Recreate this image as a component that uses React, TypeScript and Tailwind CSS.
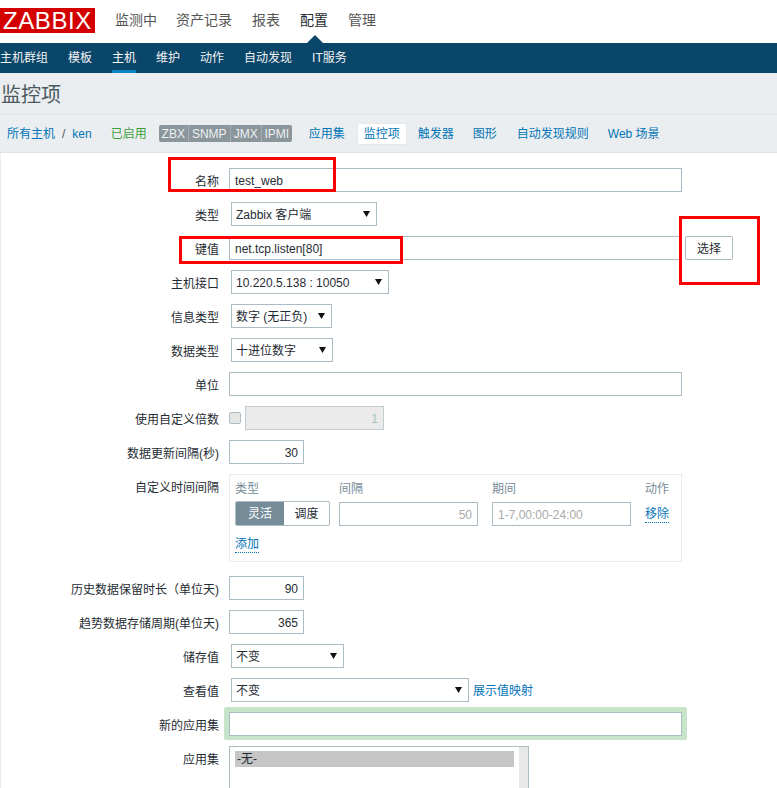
import React from "react";

const Arrow = () => (
  <svg width="7" height="6" viewBox="0 0 7 6" className="shrink-0">
    <path d="M0 0H7L3.5 6Z" fill="#111" />
  </svg>
);

const Select = ({ w, text }: { w: string; text: string }) => (
  <div className={`${w} ml-[2px] h-6 border border-[#acbbc4] bg-white flex items-center justify-between pl-[4px] pr-[6px] text-[#1f2c33]`}>
    <span className="pt-[2px]">{text}</span>
    <Arrow />
  </div>
);

const Input = ({ w, text, cls = "" }: { w: string; text?: string; cls?: string }) => (
  <div className={`${w} h-6 border border-[#acbbc4] bg-white flex items-center px-[5px] pt-[2px] text-[#1f2c33] ${cls}`}>{text}</div>
);

const Row = ({ label, children }: { label: string; children: React.ReactNode }) => (
  <div className="flex gap-[10px]">
    <div className="w-[218px] h-6 shrink-0 flex items-center justify-end pt-[3px] text-[#1f2c33] whitespace-nowrap">{label}</div>
    <div className="flex items-start flex-1 min-w-0">{children}</div>
  </div>
);

const tabs: [string, string][] = [
  ["触发器", "ml-[11px]"],
  ["图形", "ml-[19px]"],
  ["自动发现规则", "ml-[20px]"],
  ["Web 场景", "ml-[19px]"],
];

const pills: [string, string][] = [
  ["ZBX", "w-[30px]"],
  ["SNMP", "w-[42px]"],
  ["JMX", "w-[31px]"],
  ["IPMI", "w-[30px]"],
];

export default function App() {
  return (
    <div className="w-[777px] h-[788px] overflow-hidden relative bg-white text-[12px] font-['Liberation_Sans','Noto_Sans_CJK_SC',sans-serif]">
      {/* top nav */}
      <div className="h-[43px] flex items-center bg-white text-[14px] text-[#555]">
        <div className="w-[95px] h-[25px] mt-[-3px] bg-[#d40000] text-white text-[24px] leading-[25px] tracking-[0.6px] pl-[3px] whitespace-nowrap">ZABBIX</div>
        <div className="ml-[20px] flex mt-[-3px]">
          <span>监测中</span>
          <span className="ml-[19px]">资产记录</span>
          <span className="ml-[20px]">报表</span>
          <span className="ml-[20px] text-[#1f2c33]">配置</span>
          <span className="ml-[20px]">管理</span>
        </div>
      </div>
      {/* sub nav */}
      <div className="relative h-[30px] bg-[#0a466a] text-[#f2f2f2] flex items-center">
        <span>主机群组</span>
        <span className="ml-[20px]">模板</span>
        <span className="ml-[20px] text-white">主机</span>
        <span className="ml-[20px]">维护</span>
        <span className="ml-[20px]">动作</span>
        <span className="ml-[20px]">自动发现</span>
        <span className="ml-[20px]">IT服务</span>
        <div className="absolute left-[112px] bottom-0 w-6 h-[3px] bg-[#0f81c5]" />
        <svg width="16" height="8" viewBox="0 0 16 8" className="absolute left-[307px] top-[-8px]">
          <path d="M0 8L8 0L16 8Z" fill="#0a466a" />
        </svg>
      </div>
      {/* title */}
      <div className="h-[42px] bg-[#ebeef0] border-b border-[#dfe4e7] pl-px pt-[2px] flex items-center text-[20px] text-[#4b5960]">监控项</div>
      {/* breadcrumb */}
      <div className="h-[38px] bg-[#ebeef0] border-b border-[#dfe4e7] flex items-center pl-[7px]">
        <span className="text-[#0275b8]">所有主机</span>
        <span className="ml-[7px] text-[#555]">/</span>
        <span className="ml-[7px] text-[#0275b8]">ken</span>
        <span className="ml-[19px] text-[#3b9e3b]">已启用</span>
        <div className="ml-[12px] h-[17px] w-[133px] rounded-[2px] overflow-hidden bg-[#8a959c] text-[#eef1f2] flex items-stretch whitespace-nowrap divide-x divide-[#a3adb3]">
          {pills.map(([t, w]) => (
            <span key={t} className={`${w} flex items-center justify-center`}>{t}</span>
          ))}
        </div>
        <span className="text-[#0275b8] ml-[17px]">应用集</span>
        <span className="ml-[12px] h-[22px] px-[6px] bg-white rounded-[2px] border border-[#e4e8ea] text-[#0275b8] flex items-center">监控项</span>
        {tabs.map(([t, m]) => (
          <span key={t} className={`text-[#0275b8] whitespace-nowrap ${m}`}>{t}</span>
        ))}
      </div>
      {/* form */}
      <div className="flex flex-col gap-[10px] pt-[15px] border-l border-[#ebeef0]">
        <Row label="名称"><Input w="w-[453px]" text="test_web" /></Row>
        <Row label="类型"><Select w="w-[146px]" text="Zabbix 客户端" /></Row>
        <Row label="键值">
          <Input w="w-[452px]" text="net.tcp.listen[80]" />
          <div className="ml-[4px] w-[48px] h-6 border border-[#acbbc4] rounded-[2px] flex items-center justify-center pt-[2px] text-[#1f2c33]">选择</div>
        </Row>
        <Row label="主机接口"><Select w="w-[158px]" text="10.220.5.138 : 10050" /></Row>
        <Row label="信息类型"><Select w="w-[101px]" text="数字 (无正负)" /></Row>
        <Row label="数据类型"><Select w="w-[102px]" text="十进位数字" /></Row>
        <Row label="单位"><Input w="w-[453px]" /></Row>
        <Row label="使用自定义倍数">
          <div className="w-3 h-3 mt-[6px] rounded-[2px] border border-[#acbbc4] bg-[#e6e6e6]" />
          <div className="ml-[4px] w-[139px] h-6 border border-[#c3ced4] bg-[#ebebeb] flex items-center justify-end px-[5px] pt-[2px] text-[#a9c5b8]">1</div>
        </Row>
        <Row label="数据更新间隔(秒)"><Input w="w-[75px]" text="30" cls="justify-end" /></Row>
        <Row label="自定义时间间隔">
          <div className="w-[453px] h-[88px] border border-[#ebebeb] pl-[5px] pt-[5px]">
            <div className="grid grid-cols-[104px_153px_153px_1fr] text-[#768d99] leading-[18px]">
              <span>类型</span>
              <span>间隔</span>
              <span>期间</span>
              <span>动作</span>
            </div>
            <div className="grid grid-cols-[104px_153px_153px_1fr] mt-[3px]">
              <div className="w-[95px] h-[25px] flex rounded-[2px] border border-[#acbbc4] overflow-hidden">
                <div className="w-[48px] bg-[#768d99] text-white flex items-center justify-center">灵活</div>
                <div className="flex-1 flex items-center justify-center text-[#1f2c33]">调度</div>
              </div>
              <Input w="w-[139px]" text="50" cls="justify-end !text-[#a9a9a9] mt-px" />
              <Input w="w-[139px]" text="1-7,00:00-24:00" cls="!text-[#a9a9a9] mt-px" />
              <span className="text-[#0275b8] self-center mt-[2px] w-fit border-b border-dotted border-[#0275b8] leading-[15px]">移除</span>
            </div>
            <div className="mt-[11px] text-[#0275b8] w-fit border-b border-dotted border-[#0275b8] leading-[15px]">添加</div>
          </div>
        </Row>
        <div className="flex flex-col gap-[10px] pt-[4px]">
          <Row label="历史数据保留时长（单位天)"><Input w="w-[75px]" text="90" cls="justify-end" /></Row>
          <Row label="趋势数据存储周期(单位天)"><Input w="w-[75px]" text="365" cls="justify-end" /></Row>
          <Row label="储存值"><Select w="w-[113px]" text="不变" /></Row>
          <Row label="查看值">
            <Select w="w-[238px]" text="不变" />
            <span className="ml-[4px] h-6 pt-[2px] flex items-center text-[#0275b8]">展示值映射</span>
          </Row>
          <Row label="新的应用集">
            <div className="ml-[-5px] mt-[-5px] mb-[-4px] p-[5px] pb-[4px] bg-[#c7e3c8] rounded-[2px]">
              <Input w="w-[453px]" />
            </div>
          </Row>
          <Row label="应用集">
            <div className="w-[300px] h-[130px] border border-[#acbbc4] bg-white flex justify-between">
              <div className="mt-[4px] ml-[5px] w-[279px] h-4 bg-[#c6c6c6] flex items-center pl-[2px] text-[#1f2c33]">-无-</div>
              <div className="w-[9px] h-full bg-[#e8e8e8]" />
            </div>
          </Row>
        </div>
      </div>
      {/* red annotation boxes */}
      <div className="absolute left-[168px] top-[157px] w-[168px] h-[35px] border-[3px] border-[#ff0000]" />
      <div className="absolute left-[179px] top-[236px] w-[224px] h-[28px] border-[3px] border-[#ff0000]" />
      <div className="absolute left-[679px] top-[216px] w-[81px] h-[69px] border-[3px] border-[#ff0000]" />
    </div>
  );
}
